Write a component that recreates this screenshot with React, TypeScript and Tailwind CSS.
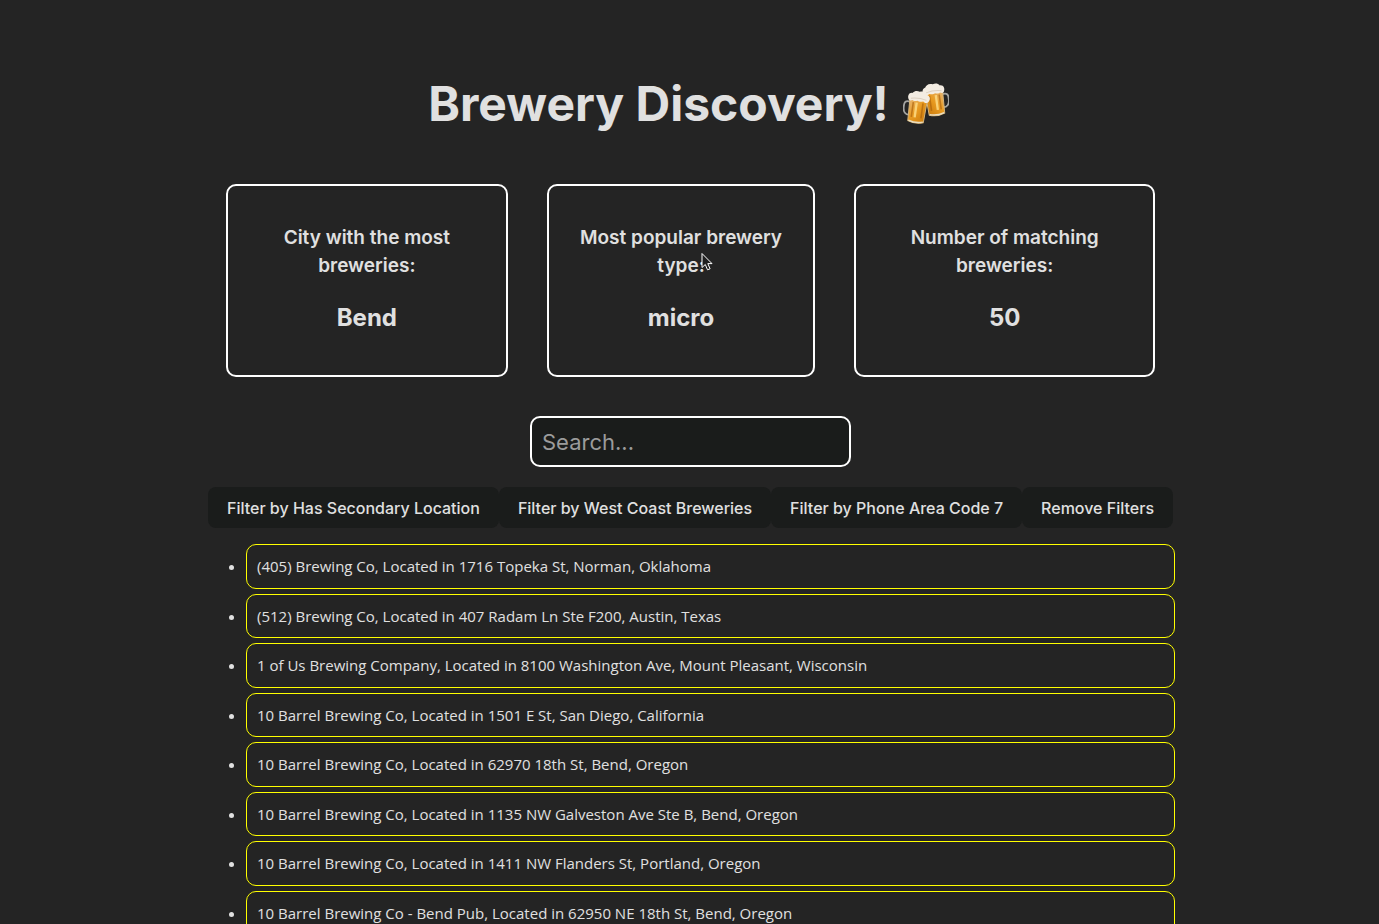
import { useState } from "react";

const stats = [
  { label: "City with the most breweries:", value: "Bend" },
  { label: "Most popular brewery type:", value: "micro" },
  { label: "Number of matching breweries:", value: "50" },
];

const filters = [
  "Filter by Has Secondary Location",
  "Filter by West Coast Breweries",
  "Filter by Phone Area Code 7",
  "Remove Filters",
];

const breweries = [
  "(405) Brewing Co, Located in 1716 Topeka St, Norman, Oklahoma",
  "(512) Brewing Co, Located in 407 Radam Ln Ste F200, Austin, Texas",
  "1 of Us Brewing Company, Located in 8100 Washington Ave, Mount Pleasant, Wisconsin",
  "10 Barrel Brewing Co, Located in 1501 E St, San Diego, California",
  "10 Barrel Brewing Co, Located in 62970 18th St, Bend, Oregon",
  "10 Barrel Brewing Co, Located in 1135 NW Galveston Ave Ste B, Bend, Oregon",
  "10 Barrel Brewing Co, Located in 1411 NW Flanders St, Portland, Oregon",
  "10 Barrel Brewing Co - Bend Pub, Located in 62950 NE 18th St, Bend, Oregon",
];

function Mug() {
  return (
    <g>
      <path d="M2 11C-3 10-4.500 12-4 17c0 5 3 8 7 7" fill="none" stroke="#a5a5a2" strokeWidth="1.8" />
      <path d="M1 6h18l-1 24q-8 3-16 0Z" fill="url(#beer)" stroke="#d5b47a" strokeWidth="1" />
      <path d="M5 11v15M15 11v15" stroke="#a9600b" strokeWidth="1.6" opacity=".65" />
      <path d="M8.5 11v15" stroke="#ffe08a" strokeWidth="2.4" opacity=".8" />
      <path d="M2.5 29.5q7.500 2.500 15 0" fill="none" stroke="#eadfc4" strokeWidth="1.4" />
      <path
        d="M0 9C-2 6-1 2 3 2 5-1 8-1 10 0c4-2 7 0 8 2 4 1 4 5 2 7-2 2-4 1-5 0-3 1-4 1-6 0-2 1-4 1-5 0-2 1-3 1-4 0Z"
        fill="#f3ece2"
      />
      <path d="M2 7.500q8-2 16 0" fill="none" stroke="#dccfbf" strokeWidth="1" />
    </g>
  );
}

function BeerMugs() {
  return (
    <svg viewBox="0 0 46 44" className="h-11 w-[46px]" role="img" aria-label="Clinking beer mugs">
      <defs>
        <linearGradient id="beer" x1="0" y1="0" x2="1" y2="1">
          <stop offset="0" stopColor="#e8b878" />
          <stop offset=".5" stopColor="#e89a20" />
          <stop offset="1" stopColor="#c8790c" />
        </linearGradient>
      </defs>
      <g transform="translate(39.500 1) rotate(-8) scale(-.98 1)">
        <Mug />
      </g>
      <g transform="translate(7 8.500) rotate(8) scale(.98 1)">
        <Mug />
      </g>
    </svg>
  );
}

export default function App() {
  const [query, setQuery] = useState("");

  return (
    <div className="h-screen overflow-x-hidden overflow-y-auto bg-[#242424] pt-[76px] pl-0.5 font-['Inter',sans-serif] text-[#e0e0e0] [scrollbar-width:none]">
      <main className="mx-auto max-w-[969px]">
        <h1 className="flex items-center justify-center gap-3.5 pr-1 text-5xl leading-[56px] font-bold">
          Brewery Discovery!
          <BeerMugs />
        </h1>

        <section className="mx-5 mt-[52px] grid grid-cols-[282fr_269fr_301fr] gap-[39px] text-center">
          {stats.map((stat, i) => (
            <div key={stat.label} className="relative rounded-[10px] border-2 border-white px-7 pt-[38px] pb-[37px]">
              <h3 className="mx-auto max-w-[210px] text-[19px] leading-7 font-semibold">{stat.label}</h3>
              <p className="mt-[18px] text-2xl leading-10 font-bold">{stat.value}</p>
              {i === 1 && (
                <svg viewBox="0 0 12 19" className="absolute top-[66px] left-[152px] h-[19px] w-3" aria-hidden="true">
                  <path
                    d="M1 1.500v14l3.300-3 2.200 5.300 2.600-1-2.300-5.200h4.200Z"
                    fill="#202020"
                    stroke="#fff"
                    strokeWidth="1"
                  />
                </svg>
              )}
            </div>
          ))}
        </section>

        <div className="mt-[39px] flex justify-center">
          <input
            type="text"
            aria-label="Search breweries"
            placeholder="Search..."
            value={query}
            onChange={(e) => setQuery(e.target.value)}
            className="h-[51px] w-[321px] rounded-[10px] border-2 border-white bg-[#1a1c1b] px-2.5 text-[22px] placeholder:text-[#9b9b9b]"
          />
        </div>

        <div className="mt-5 flex flex-wrap justify-center">
          {filters.map((label) => (
            <button key={label} type="button" className="h-[41px] rounded-lg bg-[#1a1c1b] px-[19px] text-base font-medium">
              {label}
            </button>
          ))}
        </div>

        <ul className="mt-4 flex list-disc flex-col gap-[5px] pl-10 font-['Open_Sans',sans-serif] text-[15px] leading-normal">
          {breweries
            .filter((b) => b.toLowerCase().includes(query.toLowerCase()))
            .map((brewery) => (
              <li key={brewery} className="rounded-[10px] border border-[#ffff00] p-2.5">
                {brewery}
              </li>
            ))}
        </ul>
      </main>
    </div>
  );
}
